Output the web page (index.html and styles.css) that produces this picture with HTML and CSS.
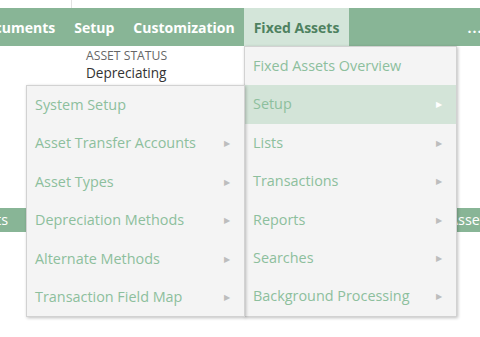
FILE: index.html
```html
<!DOCTYPE html>
<html lang="en">
<head>
  <meta charset="UTF-8">
  <meta name="viewport" content="width=device-width, initial-scale=1">
  <title>Fixed Assets</title>
  <link rel="stylesheet" href="styles.css">
</head>
<body>
  <div class="topstrip"><span class="divider"></span></div>

  <nav class="navbar">
    <a class="nav-item first">Documents</a>
    <a class="nav-item">Setup</a>
    <a class="nav-item">Customization</a>
    <a class="nav-item active">Fixed Assets</a>
    <a class="nav-item more">...</a>
  </nav>

  <div class="content">
    <div class="field">
      <div class="field-label">ASSET STATUS</div>
      <div class="field-value">Depreciating</div>
    </div>

    <div class="button-row">
      <span class="btn btn-left">Assets</span>
      <span class="btn btn-right">Assets</span>
    </div>
  </div>

  <ul class="menu menu-main">
    <li>Fixed Assets Overview</li>
    <li class="has-sub hover">Setup</li>
    <li class="has-sub">Lists</li>
    <li class="has-sub">Transactions</li>
    <li class="has-sub">Reports</li>
    <li class="has-sub">Searches</li>
    <li class="has-sub">Background Processing</li>
  </ul>

  <ul class="menu menu-sub">
    <li>System Setup</li>
    <li class="has-sub">Asset Transfer Accounts</li>
    <li class="has-sub">Asset Types</li>
    <li class="has-sub">Depreciation Methods</li>
    <li class="has-sub">Alternate Methods</li>
    <li class="has-sub">Transaction Field Map</li>
  </ul>
</body>
</html>
```
FILE: styles.css
```css
body {
  margin: 0;
  font-family: 'Open Sans', sans-serif;
  background: #fff;
  width: 480px;
  height: 337px;
  overflow: hidden;
  position: relative;
}
.topstrip {
  height: 8px;
}
.divider {
  display: block;
  margin-left: 71px;
  width: 1px;
  height: 8px;
  background: #e2e2e2;
}
.navbar {
  display: flex;
  height: 38px;
  background: #88b596;
  overflow: hidden;
  white-space: nowrap;
}
.nav-item {
  display: flex;
  align-items: center;
  padding: 0 9.5px;
  color: #fff;
  font-weight: 700;
  font-size: 14px;
}
.nav-item.first {
  margin-left: -34px;
}
.nav-item.active {
  background: #d3e5d9;
  color: #4e8160;
}
.nav-item.more {
  margin-left: auto;
  margin-right: -12px;
  letter-spacing: 1px;
}
.content {
  position: relative;
}
.field {
  margin-left: 86px;
  padding-top: 2px;
}
.field-label {
  font-size: 12.2px;
  color: #666;
  line-height: 16px;
}
.field-value {
  font-size: 13.6px;
  color: #333;
  line-height: 18px;
}
.button-row {
  display: flex;
  justify-content: space-between;
  margin-top: 126px;
}
.btn {
  height: 24px;
  line-height: 24px;
  background: #88b596;
  color: #fff;
  font-size: 14.4px;
  overflow: hidden;
  white-space: nowrap;
}
.btn-left {
  width: 8px;
  padding-right: 18px;
  direction: rtl;
}
.btn-right {
  width: 31px;
  padding-left: 9px;
}
.menu {
  position: absolute;
  margin: 0;
  padding: 0;
  list-style: none;
  background: #f4f4f4;
  border: 1px solid #d2d2d2;
  box-shadow: 1px 1px 3px rgba(0, 0, 0, 0.25);
}
.menu li {
  position: relative;
  height: 38.4px;
  line-height: 38.4px;
  padding-left: 8px;
  font-size: 14.4px;
  color: #8dbf9d;
  white-space: nowrap;
}
.menu li.has-sub::after {
  content: "\25B6";
  position: absolute;
  right: 14px;
  font-size: 8px;
  color: #bdbdbd;
}
.menu li.hover {
  background: #d3e4d8;
}
.menu li.hover::after {
  color: #fff;
}
.menu-main {
  left: 244px;
  top: 46px;
  width: 211px;
}
.menu-sub {
  left: 26px;
  top: 85px;
  width: 217px;
}
```
